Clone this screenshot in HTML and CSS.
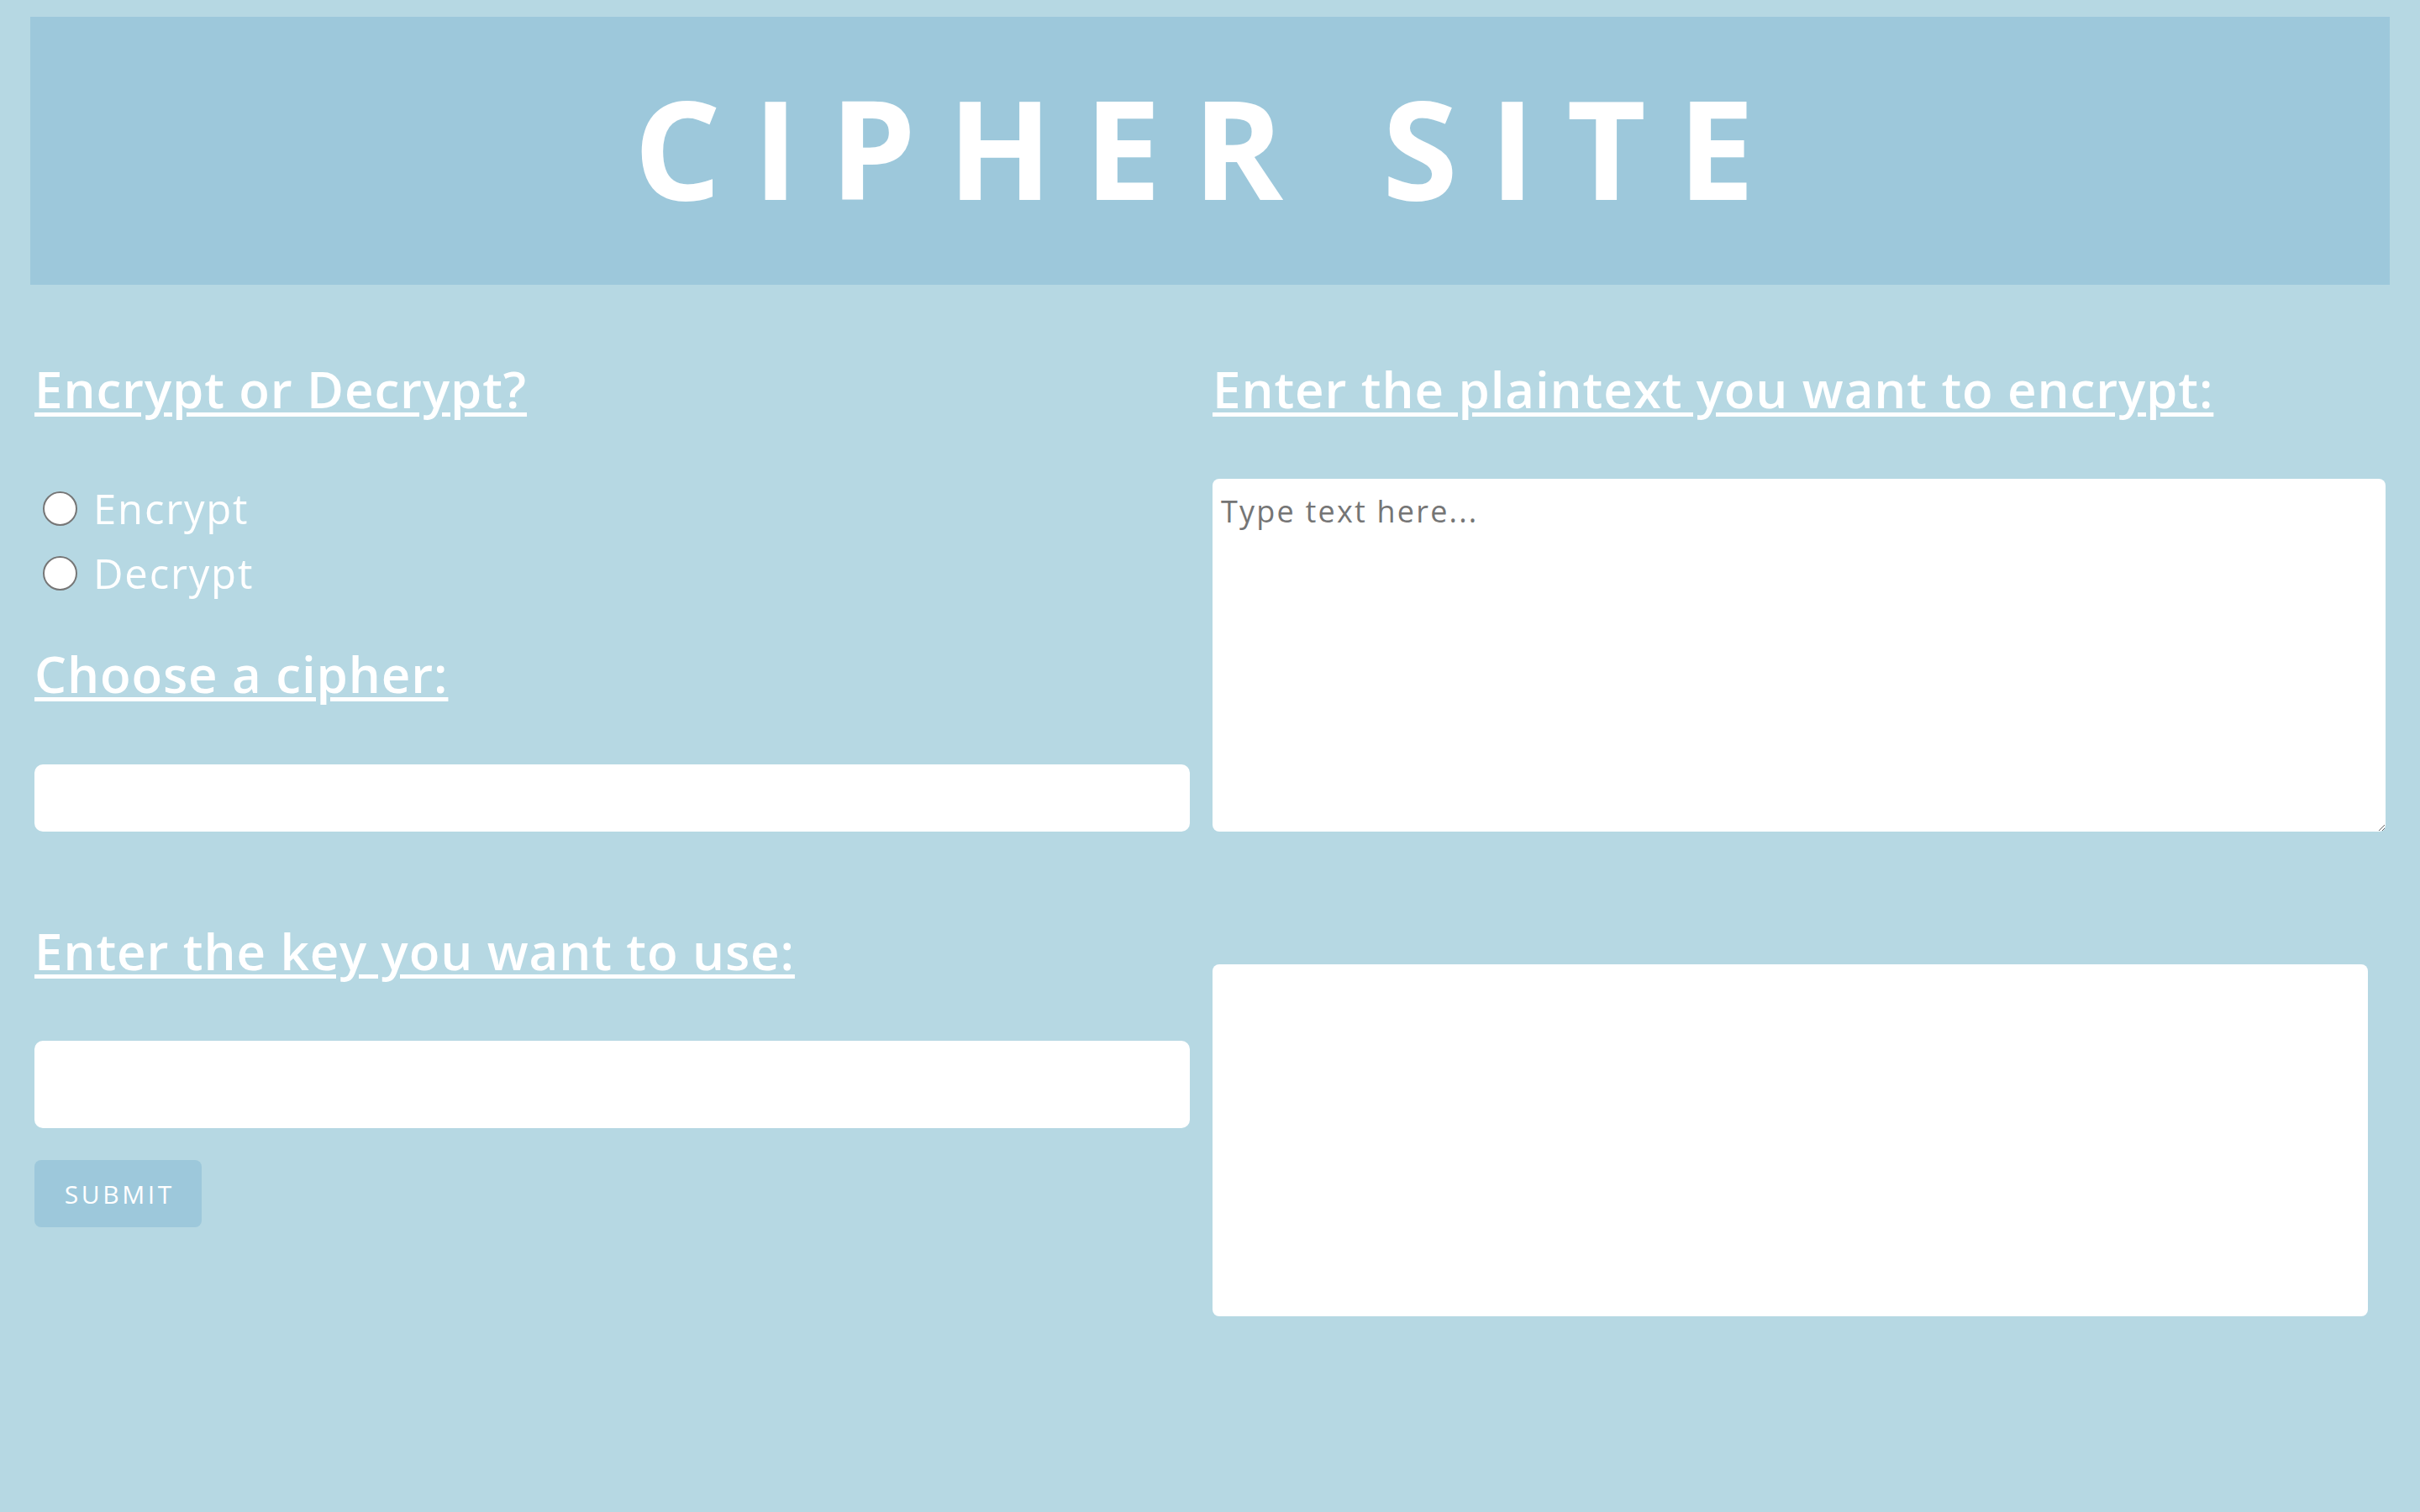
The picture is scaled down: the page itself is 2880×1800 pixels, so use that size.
FILE: index.html
```html
<!DOCTYPE html>
<html lang="en">
<head>
<meta charset="utf-8">
<title>Cipher Site</title>
<link rel="stylesheet" href="styles.css">
</head>
<body>
<header class="site-header">
  <h1 class="site-title">CIPHER SITE</h1>
</header>
<main class="layout">
  <section class="col col-left">
    <h2 class="heading">Encrypt or Decrypt?</h2>
    <div class="radio-group">
      <label class="radio-row"><input class="radio" type="radio" name="mode"><span>Encrypt</span></label>
      <label class="radio-row"><input class="radio" type="radio" name="mode"><span>Decrypt</span></label>
    </div>
    <h2 class="heading heading-cipher">Choose a cipher:</h2>
    <input class="field field-cipher" type="text">
    <h2 class="heading heading-key">Enter the key you want to use:</h2>
    <input class="field field-key" type="text">
    <button class="submit" type="button">SUBMIT</button>
  </section>
  <section class="col col-right">
    <h2 class="heading">Enter the plaintext you want to encrypt:</h2>
    <textarea class="plaintext" placeholder="Type text here..."></textarea>
    <div class="output"></div>
  </section>
</main>
</body>
</html>
```
FILE: styles.css
```css
html, body {
  margin: 0;
  padding: 0;
}

body {
  background: #b6d8e3;
  font-family: "Open Sans", "Liberation Sans", sans-serif;
  color: #ffffff;
  min-height: 1800px;
}

.site-header {
  margin: 20px 36px 0 36px;
  height: 319px;
  background: #9dc8db;
  display: flex;
  align-items: center;
  justify-content: center;
  box-sizing: border-box;
  padding-bottom: 8px;
}

.site-title {
  margin: 0;
  font-size: 163px;
  line-height: 163px;
  font-weight: 700;
  letter-spacing: 0.232em;
  color: #ffffff;
}

.layout {
  display: grid;
  grid-template-columns: 1375px 1396px;
  column-gap: 27px;
  padding: 84px 41px 0 41px;
  align-items: start;
}

.col {
  display: flex;
  flex-direction: column;
  align-items: flex-start;
}

.heading {
  margin: 0;
  font-size: 60px;
  line-height: 80px;
  font-weight: 600;
  letter-spacing: 0.9px;
  text-decoration: underline;
  text-decoration-thickness: 5px;
  text-underline-offset: 5px;
  color: #ffffff;
}

.radio-group {
  margin-top: 64px;
  display: flex;
  flex-direction: column;
}

.radio-row {
  display: flex;
  align-items: center;
  height: 77px;
  font-size: 49px;
  line-height: 77px;
  font-weight: 400;
  letter-spacing: 1.8px;
}

.radio {
  appearance: none;
  -webkit-appearance: none;
  margin: 0 19px 0 10px;
  width: 41px;
  height: 41px;
  border: 2px solid #767676;
  border-radius: 50%;
  background: #ffffff;
  box-sizing: border-box;
}

.heading-cipher {
  margin-top: 41px;
}

.field {
  display: block;
  width: 100%;
  box-sizing: border-box;
  border: none;
  border-radius: 10px;
  background: #ffffff;
  margin: 0;
  padding: 0 16px;
  font-family: inherit;
  font-size: 36px;
}

.field-cipher {
  margin-top: 68px;
  height: 80px;
}

.heading-key {
  margin-top: 102px;
}

.field-key {
  margin-top: 67px;
  height: 104px;
}

.submit {
  margin-top: 38px;
  width: 199px;
  height: 80px;
  border: none;
  border-radius: 8px;
  background: #9dc8db;
  color: #ffffff;
  font-family: inherit;
  font-size: 30px;
  font-weight: 500;
  letter-spacing: 0.12em;
  padding: 0 0 0 0.12em;
}

.plaintext {
  margin-top: 67px;
  width: 1396px;
  height: 420px;
  box-sizing: border-box;
  border: none;
  border-radius: 8px;
  background: #ffffff;
  padding: 14px 10px;
  font-family: inherit;
  font-size: 36px;
  letter-spacing: 2.2px;
  color: #333333;
}

.plaintext::placeholder {
  color: #757575;
}

.output {
  margin-top: 158px;
  width: 1375px;
  height: 419px;
  border-radius: 8px;
  background: #ffffff;
}
```
